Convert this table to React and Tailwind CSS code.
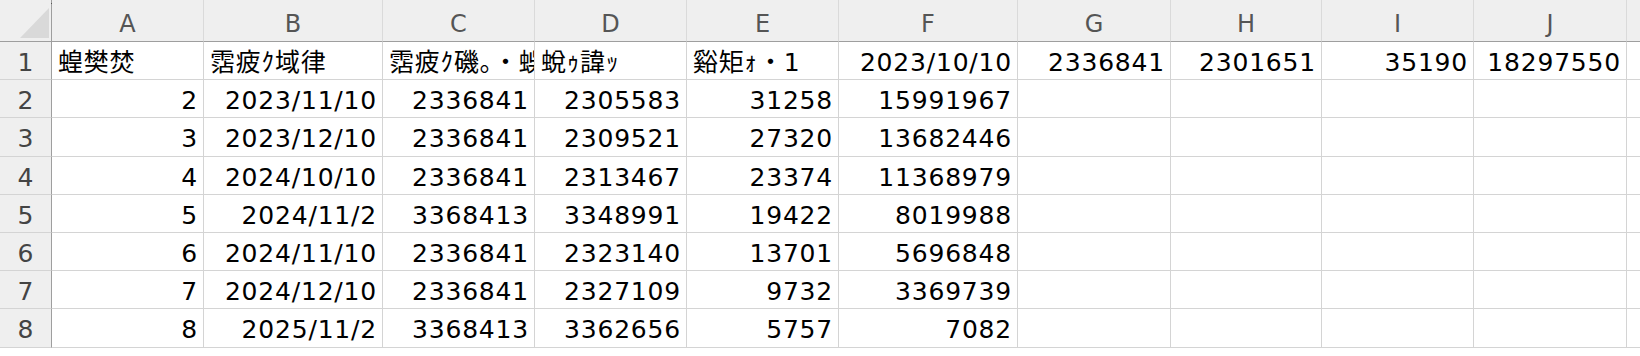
const COLS = ["A", "B", "C", "D", "E", "F", "G", "H", "I", "J"];

const gridCols =
  "grid grid-cols-[52px_152px_179px_152px_152px_152px_179px_153px_151px_152px_153px_1fr]";

const rows = [
  [
    { v: "蝗樊焚", t: true },
    { v: "霑疲ｸ域律", t: true },
    { v: "霑疲ｸ磯｡・蜈", t: true },
    { v: "蛻ｩ諱ｯ", t: true },
    { v: "谿矩ｫ・1", t: true },
    { v: "2023/10/10" },
    { v: "2336841" },
    { v: "2301651" },
    { v: "35190" },
    { v: "18297550" },
  ],
  ["2", "2023/11/10", "2336841", "2305583", "31258", "15991967"],
  ["3", "2023/12/10", "2336841", "2309521", "27320", "13682446"],
  ["4", "2024/10/10", "2336841", "2313467", "23374", "11368979"],
  ["5", "2024/11/2", "3368413", "3348991", "19422", "8019988"],
  ["6", "2024/11/10", "2336841", "2323140", "13701", "5696848"],
  ["7", "2024/12/10", "2336841", "2327109", "9732", "3369739"],
  ["8", "2025/11/2", "3368413", "3362656", "5757", "7082"],
];

function Cell({ cell }) {
  const c = typeof cell === "string" ? { v: cell } : cell || { v: "" };
  return (
    <div
      className={`h-full border-r border-b border-[#d4d4d4] pl-[6px] pr-[5px] pt-[4px] flex items-center overflow-hidden whitespace-nowrap tracking-[0.8px] ${
        c.t ? "justify-start" : "justify-end"
      }`}
    >
      {c.v}
    </div>
  );
}

export default function App() {
  return (
    <div
      className="w-[1640px] h-[356px] bg-white overflow-hidden text-black text-[25px] leading-none"
      style={{ fontFamily: '"DejaVu Sans", "Noto Sans CJK JP", sans-serif' }}
    >
      {/* Column header */}
      <div className={`${gridCols} h-[42px] bg-[#efefef]`}>
        <div className="relative border-r border-b border-[#9e9e9e]">
          <span className="absolute left-[51px] top-[3px] w-px h-px bg-[#555]" />
          <svg className="absolute left-[20px] top-[8px]" width="29" height="30">
            <polygon points="29,0 29,30 0,30" fill="#d9d9d9" />
          </svg>
        </div>
        {COLS.map((c) => (
          <div
            key={c}
            className="border-r border-b border-r-[#dadada] border-b-[#9e9e9e] flex items-center justify-center pt-[7px] text-[24px] text-[#555]"
          >
            {c}
          </div>
        ))}
        <div className="border-b border-[#9e9e9e]" />
      </div>

      {/* Rows */}
      {rows.map((row, i) => (
        <div key={i} className={`${gridCols} h-[38.2px]`}>
          <div className="bg-[#efefef] border-r border-r-[#9e9e9e] border-b border-b-[#d4d4d4] flex items-center justify-center pt-[4px] text-[#444]">
            {i + 1}
          </div>
          {COLS.map((_, j) => (
            <Cell key={j} cell={row[j]} />
          ))}
          <div className="border-b border-[#d4d4d4]" />
        </div>
      ))}
    </div>
  );
}
